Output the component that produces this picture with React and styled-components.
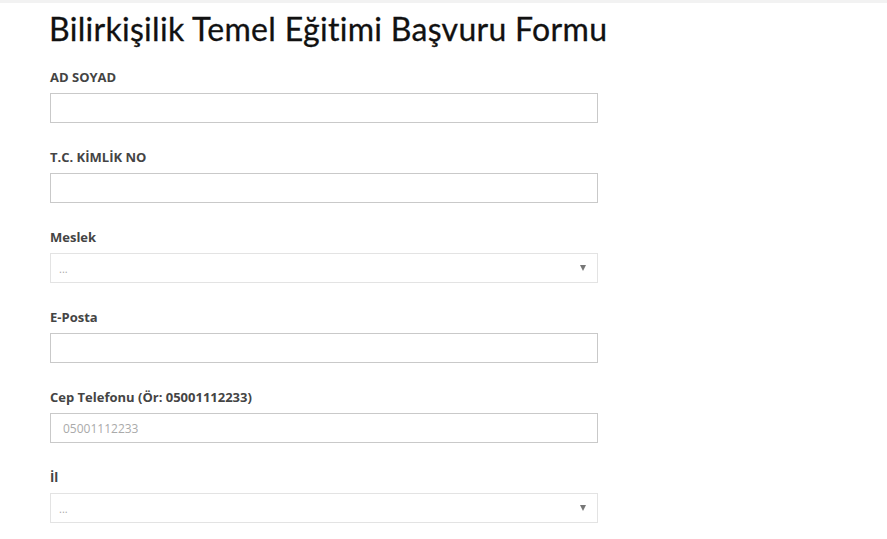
import React from "react";
import styled, { createGlobalStyle } from "styled-components";

const GlobalStyle = createGlobalStyle`
  body {
    margin: 0;
    background: #fff;
    font-family: "Open Sans", "Liberation Sans", sans-serif;
  }
`;

const TopStrip = styled.div`
  height: 3px;
  background: #f2f2f2;
`;

const Page = styled.div`
  padding: 6px 0 0 50px;
  width: 548px;
`;

const Title = styled.h1`
  margin: 0 0 18px -1px;
  font-family: Lato, "Open Sans", sans-serif;
  font-weight: 400;
  font-size: 32px;
  line-height: 40px;
  color: #111;
  letter-spacing: 0.3px;
  white-space: nowrap;
  -webkit-text-stroke: 0.3px #111;
`;

const Field = styled.div`
  display: flex;
  flex-direction: column;
  margin-bottom: 24px;
`;

const Label = styled.label`
  font-size: 13px;
  font-weight: 700;
  line-height: 20px;
  color: #444;
  margin-bottom: 6px;
`;

const Input = styled.input`
  box-sizing: border-box;
  height: 30px;
  width: 100%;
  border: 1px solid #c9c9c9;
  border-radius: 0;
  padding: 0 12px;
  font-family: "Open Sans", sans-serif;
  font-size: 12px;
  color: #444;
  outline: none;

  &::placeholder {
    color: #aaa;
  }
`;

const SelectBox = styled.div`
  box-sizing: border-box;
  height: 30px;
  border: 1px solid #e3e3e3;
  display: flex;
  align-items: center;
  justify-content: space-between;
  padding: 0 11px 0 8px;
  font-size: 11px;
  color: #aaa;
`;

const Caret = styled.span`
  width: 0;
  height: 0;
  border-left: 3.5px solid transparent;
  border-right: 3.5px solid transparent;
  border-top: 6px solid #777;
`;

const fields = [
  { label: "AD SOYAD", type: "input" },
  { label: "T.C. KİMLİK NO", type: "input" },
  { label: "Meslek", type: "select" },
  { label: "E-Posta", type: "input" },
  { label: "Cep Telefonu (Ör: 05001112233)", type: "input", placeholder: "05001112233" },
  { label: "İl", type: "select" },
];

export default function App() {
  return (
    <>
      <GlobalStyle />
      <TopStrip />
      <Page>
        <Title>Bilirkişilik Temel Eğitimi Başvuru Formu</Title>
        {fields.map((f) => (
          <Field key={f.label}>
            <Label>{f.label}</Label>
            {f.type === "select" ? (
              <SelectBox>
                <span>...</span>
                <Caret />
              </SelectBox>
            ) : (
              <Input placeholder={f.placeholder || ""} />
            )}
          </Field>
        ))}
      </Page>
    </>
  );
}
